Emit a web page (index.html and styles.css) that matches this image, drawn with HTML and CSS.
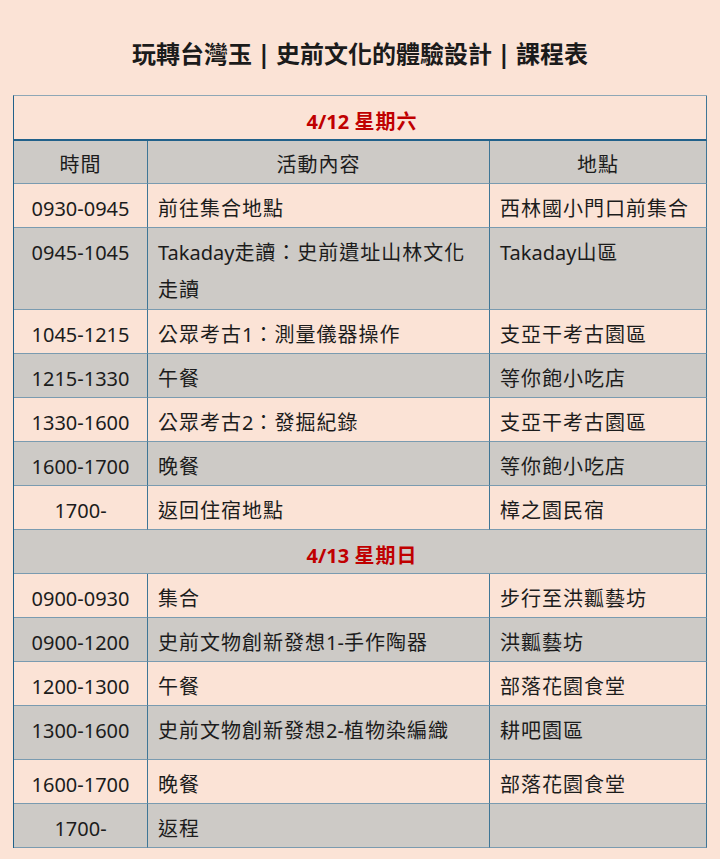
FILE: index.html
```html
<!DOCTYPE html>
<html lang="zh-Hant">
<head>
<meta charset="utf-8">
<title>課程表</title>
<link rel="stylesheet" href="styles.css">
</head>
<body>
<h1 class="title">玩轉台灣玉<span class="bar">|</span>史前文化的體驗設計<span class="bar">|</span>課程表</h1>
<table class="schedule">
  <colgroup>
    <col class="c-time">
    <col class="c-act">
    <col class="c-place">
  </colgroup>
  <tbody>
    <tr class="day first-day peach"><td colspan="3"><span class="lat">4/12 </span>星期六</td></tr>
    <tr class="head gray"><td class="center">時間</td><td class="center">活動內容</td><td class="center">地點</td></tr>
    <tr class="peach"><td class="time">0930-0945</td><td>前往集合地點</td><td>西林國小門口前集合</td></tr>
    <tr class="gray tall"><td class="time">0945-1045</td><td><span class="lat">Takaday</span>走讀：史前遺址山林文化走讀</td><td><span class="lat">Takaday</span>山區</td></tr>
    <tr class="peach"><td class="time">1045-1215</td><td>公眾考古<span class="lat">1</span>：測量儀器操作</td><td>支亞干考古園區</td></tr>
    <tr class="gray"><td class="time">1215-1330</td><td>午餐</td><td>等你飽小吃店</td></tr>
    <tr class="peach"><td class="time">1330-1600</td><td>公眾考古<span class="lat">2</span>：發掘紀錄</td><td>支亞干考古園區</td></tr>
    <tr class="gray"><td class="time">1600-1700</td><td>晚餐</td><td>等你飽小吃店</td></tr>
    <tr class="peach"><td class="time">1700-</td><td>返回住宿地點</td><td>樟之園民宿</td></tr>
    <tr class="day gray"><td colspan="3"><span class="lat">4/13 </span>星期日</td></tr>
    <tr class="peach"><td class="time">0900-0930</td><td>集合</td><td>步行至洪瓤藝坊</td></tr>
    <tr class="gray"><td class="time">0900-1200</td><td>史前文物創新發想<span class="lat">1-</span>手作陶器</td><td>洪瓤藝坊</td></tr>
    <tr class="peach"><td class="time">1200-1300</td><td>午餐</td><td>部落花園食堂</td></tr>
    <tr class="gray mid"><td class="time">1300-1600</td><td>史前文物創新發想<span class="lat">2-</span>植物染編織</td><td>耕吧園區</td></tr>
    <tr class="peach"><td class="time">1600-1700</td><td>晚餐</td><td>部落花園食堂</td></tr>
    <tr class="gray"><td class="time">1700-</td><td>返程</td><td></td></tr>
  </tbody>
</table>
</body>
</html>
```

FILE: styles.css
```css
html, body {
  margin: 0;
  padding: 0;
  background: #fbe3d6;
}

body {
  font-family: "Noto Sans", "Noto Sans CJK TC", sans-serif;
  color: #1c1c1c;
}

.title {
  margin: 0;
  padding-top: 37px;
  height: 32px;
  line-height: 32px;
  margin-bottom: 26px;
  text-align: center;
  font-family: "Noto Sans CJK TC", sans-serif;
  font-size: 24px;
  font-weight: 700;
  color: #1b1b1b;
}

.title .bar {
  display: inline-block;
  width: 24px;
  text-align: center;
  font-family: "DejaVu Sans", sans-serif;
  font-weight: 700;
  font-size: 24px;
}

.schedule {
  margin-left: 13px;
  width: 694px;
  table-layout: fixed;
  border-collapse: separate;
  border-spacing: 0;
  border-left: 1px solid #21618a;
  border-top: 1px solid #8ea7b6;
}

.c-time { width: 134px; }
.c-act { width: 342px; }
.c-place { width: 217px; }

.schedule td {
  box-sizing: border-box;
  padding: 6px 6px 0 10px;
  line-height: 37px;
  font-size: 20px;
  letter-spacing: 1px;
  vertical-align: top;
  text-align: left;
  border-right: 1px solid #3f7696;
  border-bottom: 1px solid #7a9bb0;
}

.schedule .lat {
  letter-spacing: 0;
}

.schedule td.time {
  text-align: center;
  letter-spacing: 0;
  padding-left: 4px;
  padding-right: 4px;
}

.schedule td.center {
  text-align: center;
  padding-left: 4px;
  padding-right: 4px;
}

.schedule tr { height: 44px; }
.schedule tr.tall { height: 82px; }
.schedule tr.mid { height: 54px; }

.schedule tr.head { height: 43px; }
.schedule tr.head td {
  padding-top: 5px;
}

.schedule tr.day td {
  text-align: center;
  font-weight: 700;
  color: #c00000;
  padding-top: 9px;
  line-height: 34px;
}

.schedule tr.first-day { height: 45px; }
.schedule tr.first-day td {
  border-bottom: 2px solid #21618a;
}

.peach { background: #fbe3d6; }
.gray { background: #cdcac6; }
```
